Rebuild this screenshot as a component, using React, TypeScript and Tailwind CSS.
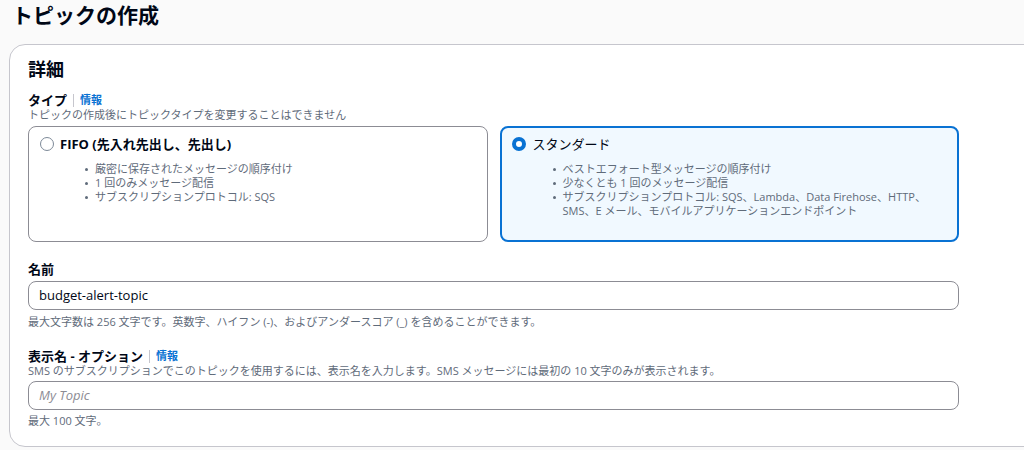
import React from 'react';

const fontStack = "font-['Open_Sans','Noto_Sans_CJK_JP',sans-serif]";

const Radio: React.FC<{ checked?: boolean }> = ({ checked }) =>
  checked ? (
    <span className="block w-[14px] h-[14px] rounded-full border-[4px] border-[#0972d3] bg-white shrink-0" />
  ) : (
    <span className="block w-[14px] h-[14px] rounded-full border-[1.5px] border-[#7d8998] bg-white shrink-0" />
  );

const Bullets: React.FC<{ items: React.ReactNode[]; offset: string }> = ({ items, offset }) => (
  <ul className={`mt-[9px] ${offset} text-[11px] leading-[14px] text-[#5f6b7a]`}>
    {items.map((item, i) => (
      <li key={i} className="flex">
        <span className="w-[10px] shrink-0 h-[14px] flex items-center">
          <span className="block w-[3px] h-[3px] rounded-full bg-[#5f6b7a]" />
        </span>
        <span>{item}</span>
      </li>
    ))}
  </ul>
);

const LabelRow: React.FC<{ label: string; info?: boolean }> = ({ label, info }) => (
  <div className="flex items-center h-[16px]">
    <span className="text-[13px] font-bold text-[#000716] leading-[16px]">{label}</span>
    {info && (
      <>
        <span className="mx-[6px] w-px h-[13px] bg-[#c6c6cd]" />
        <span className="text-[11px] font-bold text-[#0972d3] leading-[16px]">情報</span>
      </>
    )}
  </div>
);

const App: React.FC = () => {
  return (
    <div className={`w-[1024px] h-[450px] overflow-hidden bg-[#fafafa] ${fontStack}`}>
      <h1 className="pt-[1px] pl-[12px] text-[21px] leading-[28px] font-bold text-[#000716]">トピックの作成</h1>

      <div className="mt-[15px] ml-[9px] w-[1040px] h-[403px] rounded-[16px] border border-[#c6c6cd] bg-white pl-[18px] pt-[12px]">
        <h2 className="text-[18px] leading-[24px] font-bold text-[#000716]">詳細</h2>

        <div className="mt-[11px]">
          <LabelRow label="タイプ" info />
          <p className="text-[11px] leading-[14px] text-[#5f6b7a]">トピックの作成後にトピックタイプを変更することはできません</p>
        </div>

        <div className="mt-[4px] w-[931px] grid grid-cols-2 gap-[12px]">
          <div className="h-[116px] rounded-[8px] border border-[#8c8c94] bg-white pl-[11px] pt-[8px]">
            <div className="flex items-center gap-[6px] h-[18px]">
              <Radio />
              <span className="text-[13px] font-bold text-[#000716] leading-[18px]">FIFO (先入れ先出し、先出し)</span>
            </div>
            <Bullets
              offset="ml-[45px]"
              items={['厳密に保存されたメッセージの順序付け', '1 回のみメッセージ配信', 'サブスクリプションプロトコル: SQS']}
            />
          </div>

          <div className="h-[116px] rounded-[8px] border-2 border-[#0972d3] bg-[#f1f9ff] pl-[10px] pt-[7px]">
            <div className="flex items-center gap-[7px] h-[18px]">
              <Radio checked />
              <span className="text-[13px] text-[#000716] leading-[18px]">スタンダード</span>
            </div>
            <Bullets
              offset="ml-[41px]"
              items={[
                'ベストエフォート型メッセージの順序付け',
                '少なくとも 1 回のメッセージ配信',
                <>
                  サブスクリプションプロトコル: SQS、Lambda、Data Firehose、HTTP、
                  <br />
                  SMS、E メール、モバイルアプリケーションエンドポイント
                </>,
              ]}
            />
          </div>
        </div>

        <div className="mt-[19px]">
          <LabelRow label="名前" />
          <div className="mt-[4px] w-[931px] h-[29px] rounded-[8px] border border-[#8c8c94] bg-white pl-[10px] flex items-center">
            <span className="text-[13px] text-[#000716]">budget-alert-topic</span>
          </div>
          <p className="mt-[5px] text-[11px] leading-[14px] text-[#5f6b7a]">
            最大文字数は 256 文字です。英数字、ハイフン (-)、およびアンダースコア (_) を含めることができます。
          </p>
        </div>

        <div className="mt-[19px]">
          <LabelRow label="表示名 - オプション" info />
          <p className="text-[11px] leading-[14px] text-[#5f6b7a]">
            SMS のサブスクリプションでこのトピックを使用するには、表示名を入力します。SMS メッセージには最初の 10 文字のみが表示されます。
          </p>
          <div className="mt-[3px] w-[931px] h-[29px] rounded-[8px] border border-[#8c8c94] bg-white pl-[10px] flex items-center">
            <span className="text-[13px] italic text-[#8c8c94]">My Topic</span>
          </div>
          <p className="mt-[4px] text-[11px] leading-[14px] text-[#5f6b7a]">最大 100 文字。</p>
        </div>
      </div>
    </div>
  );
};

export default App;
